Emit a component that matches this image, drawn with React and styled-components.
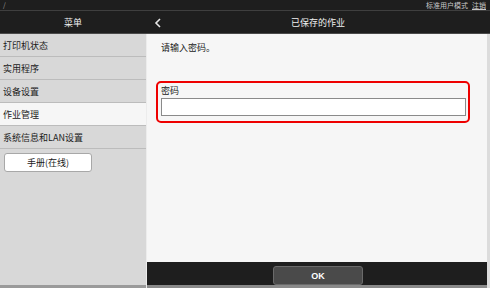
import styled, { createGlobalStyle } from "styled-components";

const GlobalStyle = createGlobalStyle`
  html, body {
    margin: 0;
    padding: 0;
    background: #1e1e1e;
  }
  * {
    box-sizing: border-box;
  }
`;

const font = `"Noto Sans CJK SC", "Liberation Sans", sans-serif`;

const Screen = styled.div`
  width: 490px;
  height: 288px;
  display: flex;
  flex-direction: column;
  font-family: ${font};
  background: #1e1e1e;
  overflow: hidden;
`;

const StatusBar = styled.div`
  height: 11px;
  display: flex;
  align-items: center;
  justify-content: space-between;
  padding: 0 4px 0 3px;
  background: #1e1e1e;
  border-bottom: 1px solid #3f3f3f;
  color: #9a9a9a;
  font-size: 7px;
  line-height: 1;
`;

const UserLinks = styled.div`
  display: flex;
  gap: 4px;
  color: #c8c8c8;
`;

const Logout = styled.span`
  text-decoration: underline;
`;

const Header = styled.div`
  height: 23px;
  display: flex;
  background: #1e1e1e;
  border-bottom: 1px solid #4a4a4a;
  color: #f0f0f0;
  font-size: 9px;
`;

const MenuTitle = styled.div`
  width: 146px;
  display: flex;
  align-items: center;
  justify-content: center;
`;

const PageTitle = styled.div`
  flex: 1;
  display: flex;
  align-items: center;
  padding: 0 10px;
  position: relative;
  justify-content: center;
`;

const Back = styled.span`
  position: absolute;
  left: 8px;
  top: 0;
  bottom: 0;
  padding-top: 2px;
  display: flex;
  align-items: center;
`;

const Body = styled.div`
  flex: 1;
  display: flex;
  min-height: 0;
`;

const Sidebar = styled.div`
  width: 146px;
  background: #d8d8d8;
  display: flex;
  flex-direction: column;
  border-bottom: 3px solid #9a9a9a;
`;

const MenuItem = styled.div`
  height: 23px;
  display: flex;
  align-items: center;
  padding-left: 3px;
  font-size: 9px;
  color: #1a1a1a;
  background: ${({ active }) => (active ? "#f6f6f6" : "transparent")};
  border-bottom: 1px solid #bcbcbc;
`;

const ManualButton = styled.div`
  margin: 4px 0 0 4px;
  width: 88px;
  height: 19px;
  background: #ffffff;
  border: 1px solid #a8a8a8;
  border-radius: 3px;
  display: flex;
  align-items: center;
  justify-content: center;
  font-size: 9px;
  color: #1a1a1a;
`;

const Main = styled.div`
  flex: 1;
  display: flex;
  flex-direction: column;
  border-left: 1px solid #ececec;
  border-right: 3px solid #dcdcdc;
`;

const Content = styled.div`
  flex: 1;
  background: #f6f6f6;
  padding: 7px 17px 0 9px;
  display: flex;
  flex-direction: column;
`;

const Prompt = styled.div`
  font-size: 9px;
  color: #1a1a1a;
  margin-left: 5px;
`;

const Highlight = styled.div`
  margin-top: 27px;
  border: 2px solid #ee0000;
  border-radius: 5px;
  padding: 2px 2px 5px 3px;
  display: flex;
  flex-direction: column;
  gap: 1px;
`;

const Label = styled.div`
  font-size: 9px;
  color: #1a1a1a;
  line-height: 12px;
`;

const Field = styled.div`
  height: 18px;
  background: #fff;
  border: 1px solid #8a8a8a;
`;

const Footer = styled.div`
  height: 26px;
  padding-top: 4px;
  background: #1e1e1e;
  border-bottom: 3px solid #8a8a8a;
  display: flex;
  align-items: flex-start;
  justify-content: center;
`;

const OkButton = styled.div`
  width: 90px;
  height: 19px;
  background: #4a4a4a;
  border: 1px solid #6a6a6a;
  border-radius: 3px;
  color: #fff;
  font-family: "Liberation Sans", sans-serif;
  font-weight: bold;
  font-size: 9px;
  display: flex;
  align-items: center;
  justify-content: center;
  margin-left: 2px;
`;

const menu = ["打印机状态", "实用程序", "设备设置", "作业管理", "系统信息和LAN设置"];

export default function App() {
  return (
    <>
      <GlobalStyle />
      <Screen>
        <StatusBar>
          <span>/</span>
          <UserLinks>
            <span>标准用户模式</span>
            <Logout>注销</Logout>
          </UserLinks>
        </StatusBar>
        <Header>
          <MenuTitle>菜单</MenuTitle>
          <PageTitle>
            <Back>
              <svg width="8" height="10" viewBox="0 0 8 10">
                <path d="M6 1 L2 5 L6 9" fill="none" stroke="#e8e8e8" strokeWidth="1.6" />
              </svg>
            </Back>
            已保存的作业
          </PageTitle>
        </Header>
        <Body>
          <Sidebar>
            {menu.map((m) => (
              <MenuItem key={m} active={m === "作业管理"}>
                {m}
              </MenuItem>
            ))}
            <ManualButton>手册(在线)</ManualButton>
          </Sidebar>
          <Main>
            <Content>
              <Prompt>请输入密码。</Prompt>
              <Highlight>
                <Label>密码</Label>
                <Field />
              </Highlight>
            </Content>
            <Footer>
              <OkButton>OK</OkButton>
            </Footer>
          </Main>
        </Body>
      </Screen>
    </>
  );
}
